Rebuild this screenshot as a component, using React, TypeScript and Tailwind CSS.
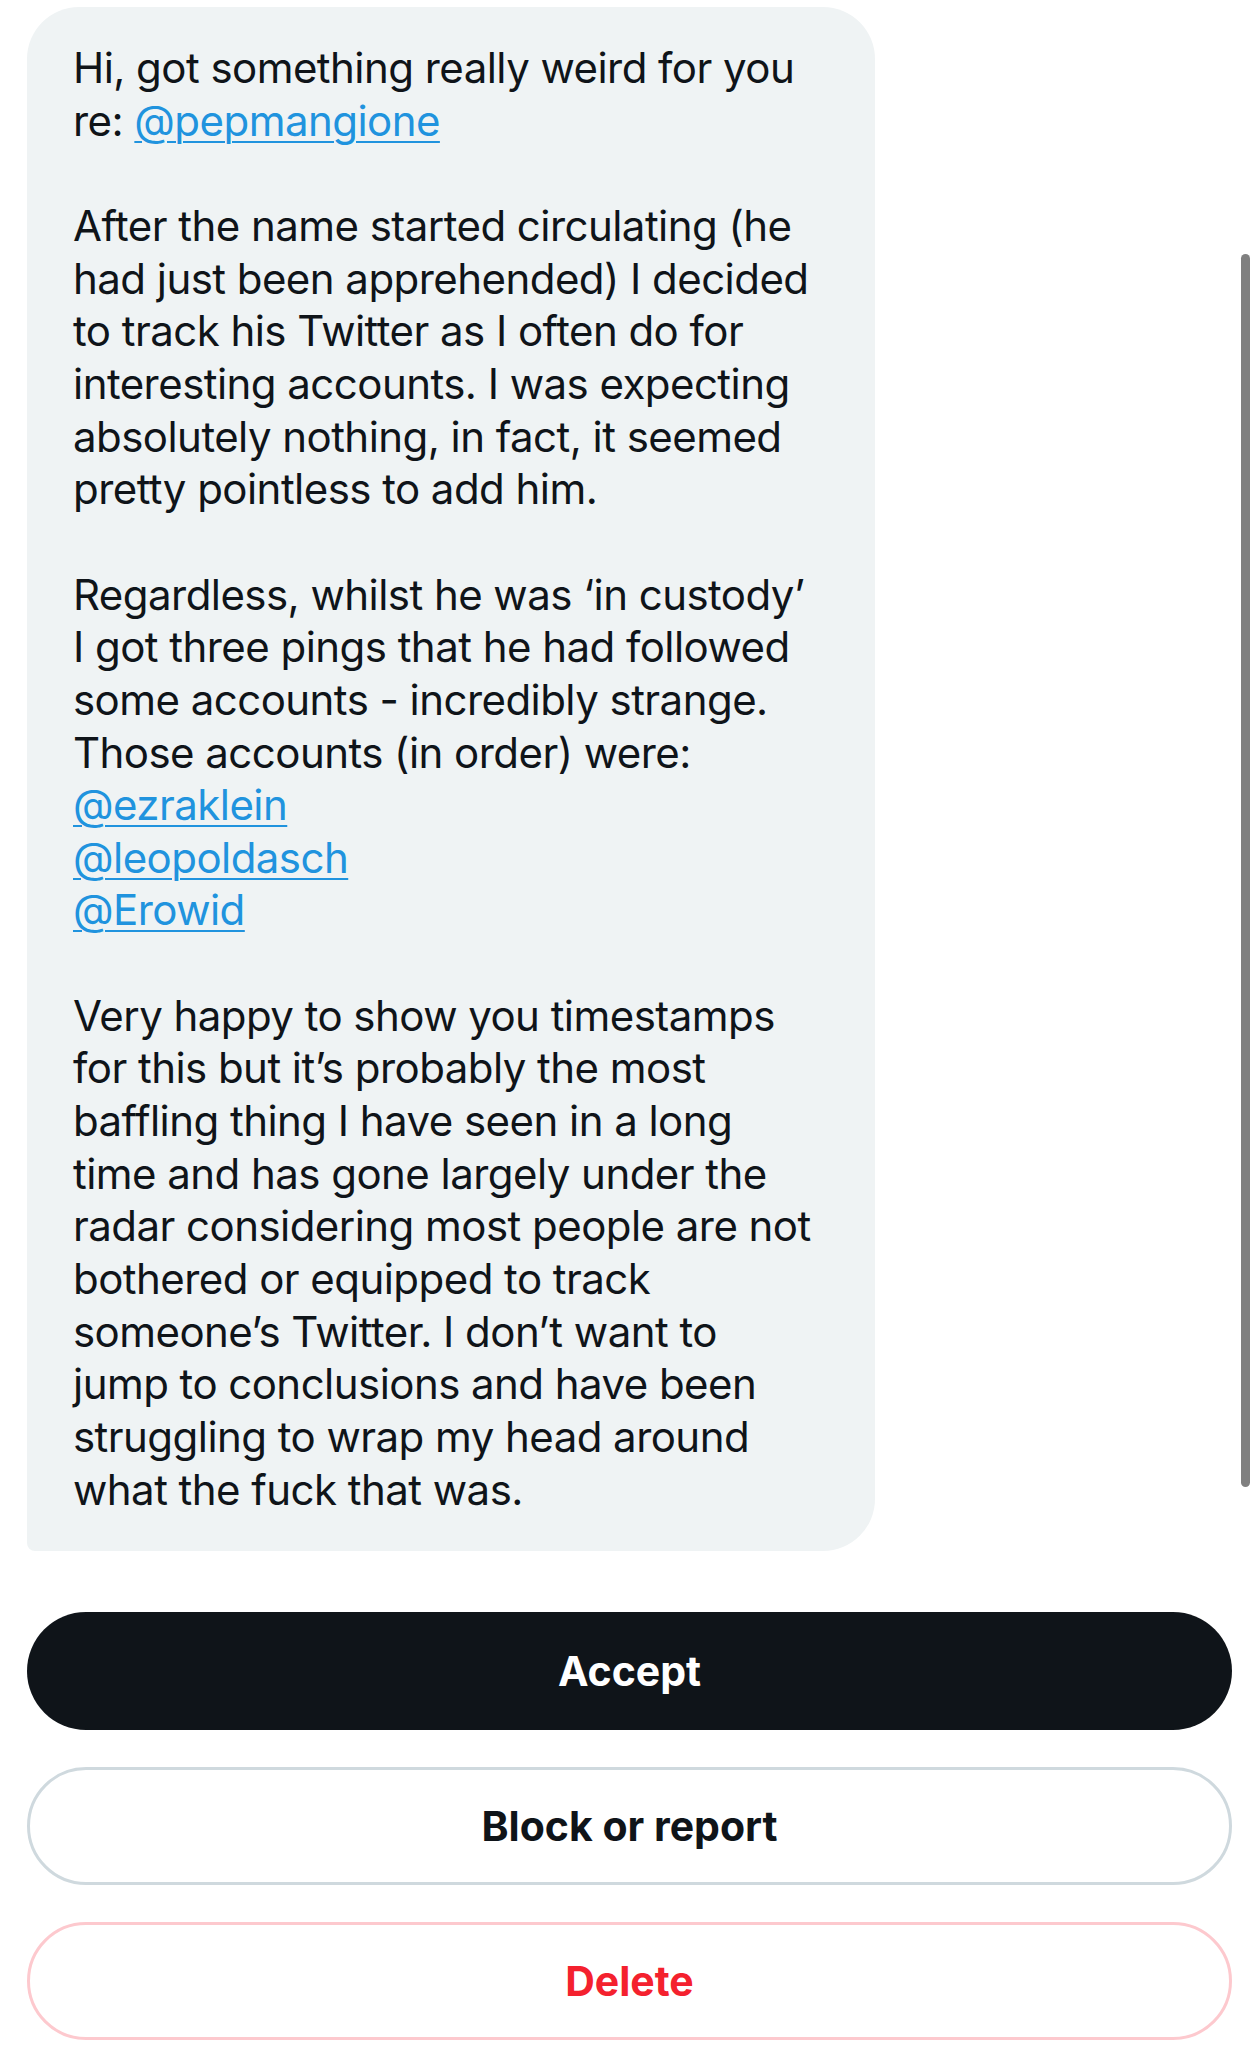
import React from "react";

const Link = ({ children }: { children: React.ReactNode }) => (
  <span className="text-[#2093de] underline decoration-[2px] underline-offset-[5px]">{children}</span>
);

const lines: (React.ReactNode | null)[] = [
  "Hi, got something really weird for you",
  <>re: <Link>@pepmangione</Link></>,
  null,
  "After the name started circulating (he",
  "had just been apprehended) I decided",
  "to track his Twitter as I often do for",
  "interesting accounts. I was expecting",
  "absolutely nothing, in fact, it seemed",
  "pretty pointless to add him.",
  null,
  "Regardless, whilst he was \u2018in custody\u2019",
  "I got three pings that he had followed",
  "some accounts - incredibly strange.",
  "Those accounts (in order) were:",
  <Link>@ezraklein</Link>,
  <Link>@leopoldasch</Link>,
  <Link>@Erowid</Link>,
  null,
  "Very happy to show you timestamps",
  "for this but it\u2019s probably the most",
  "baffling thing I have seen in a long",
  "time and has gone largely under the",
  "radar considering most people are not",
  "bothered or equipped to track",
  "someone\u2019s Twitter. I don\u2019t want to",
  "jump to conclusions and have been",
  "struggling to wrap my head around",
  "what the fuck that was.",
];

export default function App() {
  return (
    <div className="relative w-[1258px] min-h-[2048px] bg-white pt-[7px] px-[27px] font-['Inter',sans-serif]">
      <div className="w-[848px] bg-[#eff3f4] rounded-[52px] rounded-bl-[8px] pl-[46px] pr-[20px] pt-[35px] pb-[35px] text-[#0f1419] text-[42px] leading-[52.65px] tracking-[-0.013em]">
        {lines.map((l, i) =>
          l === null ? (
            <div key={i} className="h-[52.65px]" />
          ) : (
            <div key={i} className="whitespace-nowrap">{l}</div>
          )
        )}
      </div>

      <div className="mt-[61px] w-[1205px] flex flex-col gap-[37px]">
        <button className="h-[118px] w-full rounded-full bg-[#0f1419] text-white text-[41px] font-bold">
          Accept
        </button>
        <button className="h-[118px] w-full rounded-full bg-white border-[3px] border-[#cfd9de] text-[#0f1419] text-[41px] font-bold">
          Block or report
        </button>
        <button className="h-[118px] w-full rounded-full bg-white border-[3px] border-[#fdc9ce] text-[#f4212e] text-[41px] font-bold">
          Delete
        </button>
      </div>

      <div className="absolute left-[1241px] top-[254px] w-[9px] h-[1233px] rounded-full bg-[#808080]" />
    </div>
  );
}
